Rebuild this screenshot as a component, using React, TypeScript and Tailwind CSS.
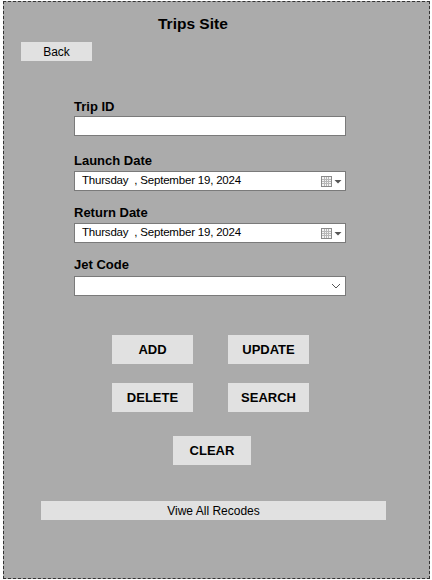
const CalendarIcon = () => (
  <svg width="21" height="11" viewBox="0 0 21 11" className="shrink-0">
    <rect x="0.5" y="0.5" width="10" height="10" fill="#f4f4f4" stroke="#8a8a8a" />
    <path d="M1 3.5h9M1 5.5h9M1 7.5h9M3.5 1v9M5.5 1v9M7.5 1v9" stroke="#b8b8b8" strokeWidth="1" />
    <path d="M13.5 4h7l-3.5 3.5z" fill="#555" />
  </svg>
);

const DateBox = () => (
  <div className="mt-[3px] flex h-[20px] w-[272px] items-center justify-between border border-[#7a7a7a] bg-white pl-[7px] pr-[3px] text-[11.5px] leading-none text-black">
    <span className="whitespace-pre tracking-[-0.2px]">Thursday  , September 19, 2024</span>
    <CalendarIcon />
  </div>
);

const Label = ({ text, className }: { text: string; className?: string }) => (
  <div className={"h-[15px] text-[13px] font-bold leading-[15px] text-black " + (className ?? "")}>
    {text}
  </div>
);

const ActionButton = ({ text, className }: { text: string; className?: string }) => (
  <button className={"flex h-[29px] items-center justify-center bg-[#e1e1e1] text-[13px] font-bold text-black " + (className ?? "")}>
    {text}
  </button>
);

export default function App() {
  return (
    <div className="h-[580px] w-[432px] bg-white pl-[3px] pt-[1px] font-['Liberation_Sans',Arial,sans-serif]">
      <div className="flex h-[578px] w-[427px] flex-col border border-dashed border-[#333] bg-[#ababab]">
        <div className="ml-[154px] mt-[13px] text-[15.5px] font-bold leading-[18px] text-black">Trips Site</div>

        <button className="ml-[17px] mt-[9px] flex h-[19px] w-[71px] items-center justify-center bg-[#e1e1e1] text-[12px] text-black">
          Back
        </button>

        <div className="ml-[70px] flex w-[272px] flex-col">
          <Label text="Trip ID" className="mt-[38px]" />
          <div className="mt-[2px] h-[20px] w-[272px] border border-[#7a7a7a] bg-white" />

          <Label text="Launch Date" className="mt-[17px]" />
          <DateBox />

          <Label text="Return Date" className="mt-[14px]" />
          <DateBox />

          <Label text="Jet Code" className="mt-[14px]" />
          <div className="mt-[4px] flex h-[20px] w-[272px] items-center justify-end border border-[#7a7a7a] bg-white pr-[4px]">
            <svg width="10" height="6" viewBox="0 0 10 6">
              <path d="M1 1l4 4 4-4" fill="none" stroke="#555" strokeWidth="1" />
            </svg>
          </div>
        </div>

        <div className="ml-[108px] mt-[39px] flex gap-[35px]">
          <ActionButton text="ADD" className="w-[81px]" />
          <ActionButton text="UPDATE" className="w-[81px]" />
        </div>
        <div className="ml-[108px] mt-[19px] flex gap-[35px]">
          <ActionButton text="DELETE" className="w-[81px]" />
          <ActionButton text="SEARCH" className="w-[81px]" />
        </div>
        <div className="ml-[169px] mt-[24px] flex">
          <ActionButton text="CLEAR" className="w-[78px]" />
        </div>

        <button className="ml-[37px] mt-[36px] flex h-[19px] w-[345px] items-center justify-center bg-[#e1e1e1] text-[12px] text-black">
          Viwe All Recodes
        </button>
      </div>
    </div>
  );
}
